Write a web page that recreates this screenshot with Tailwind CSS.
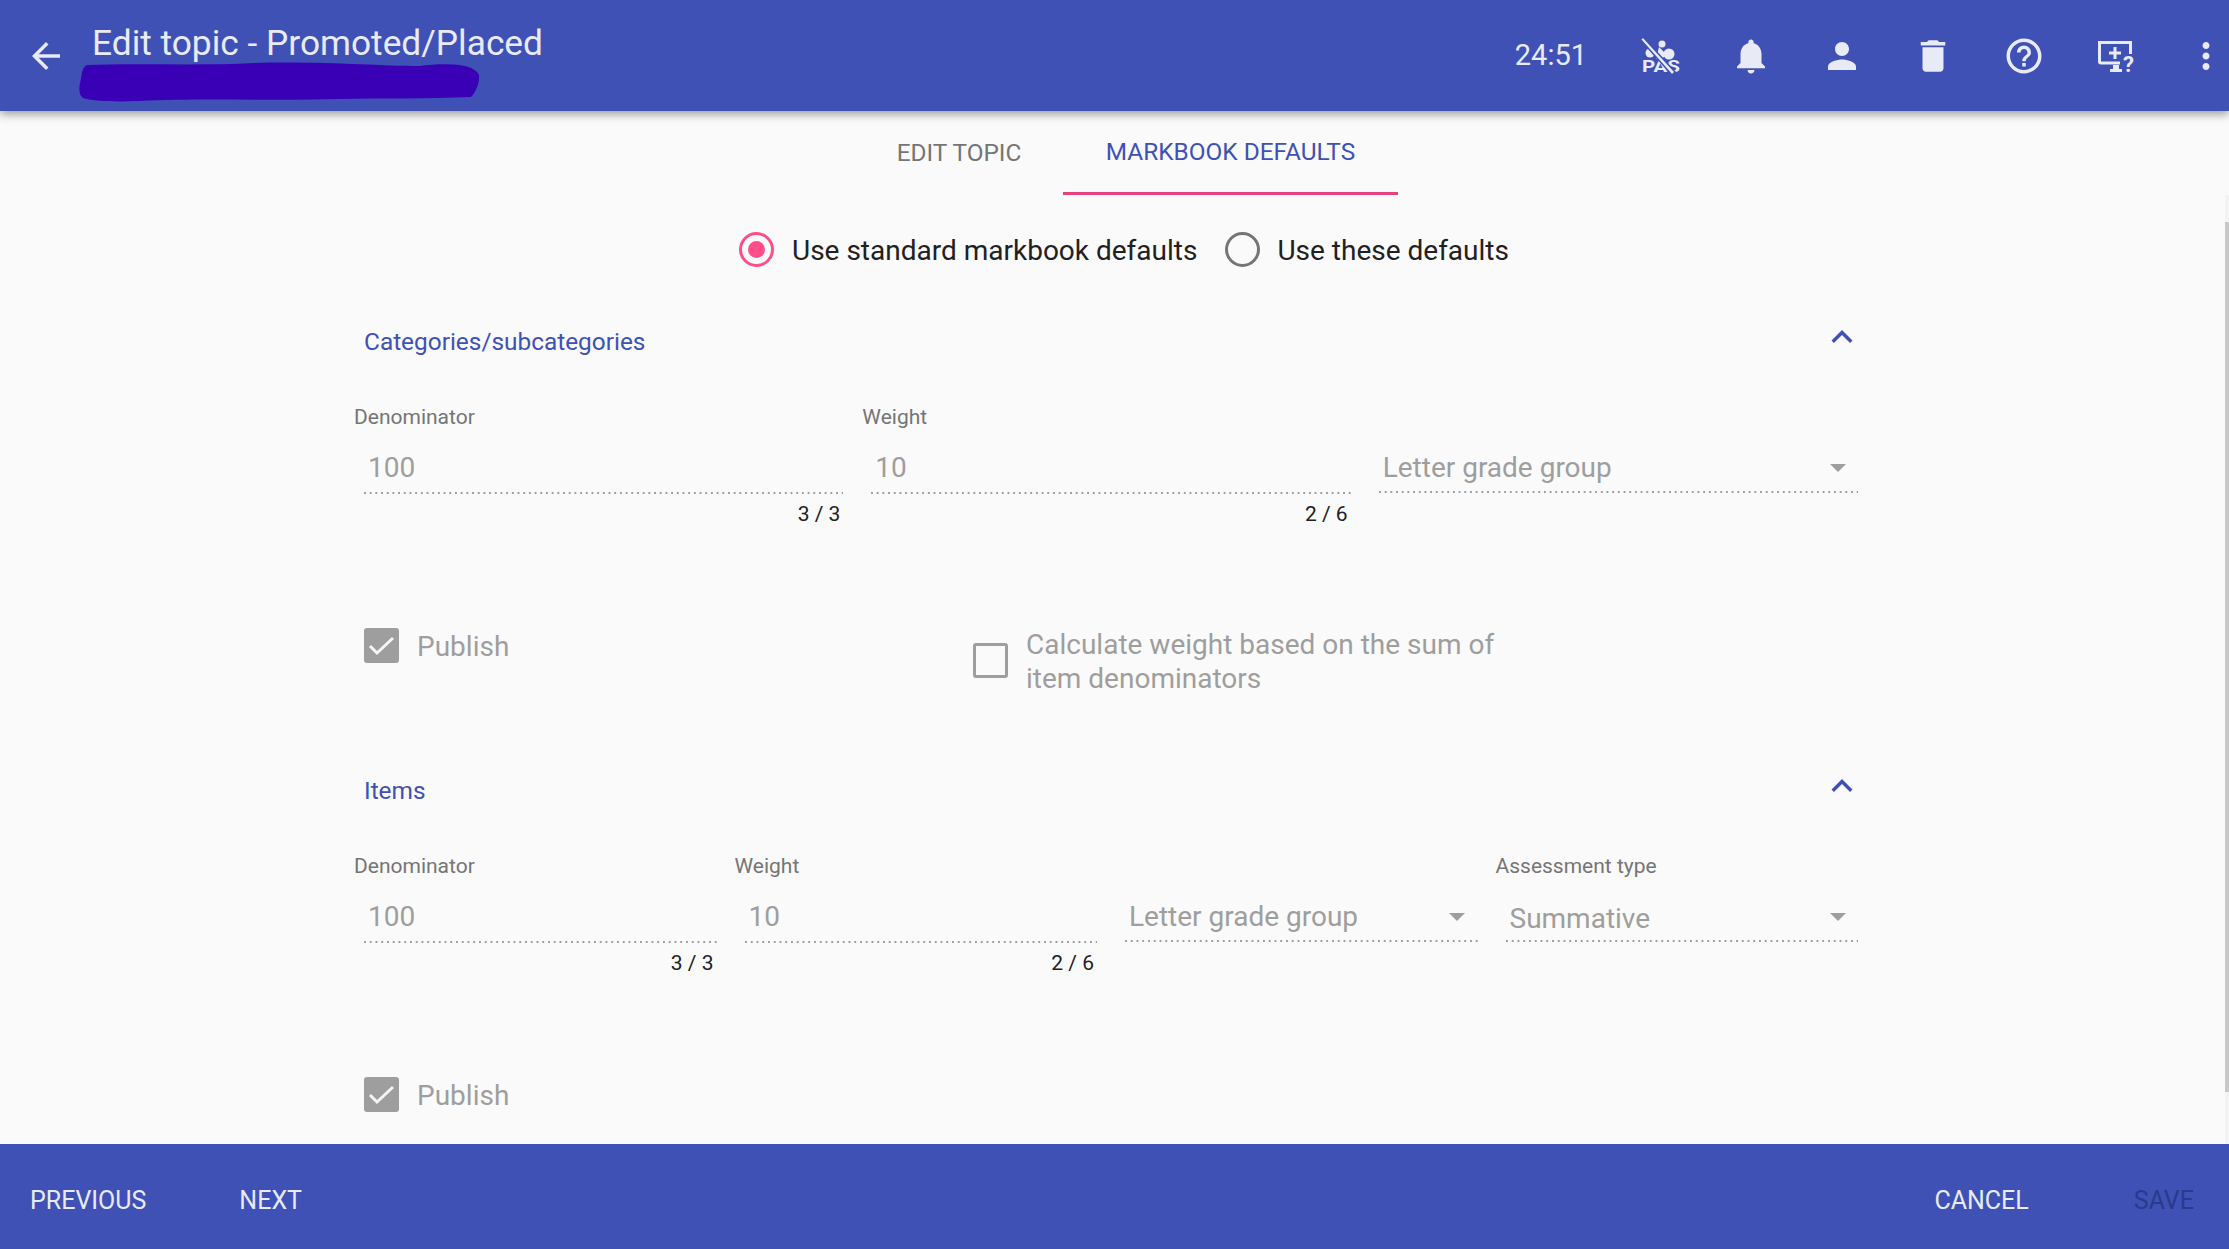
<!DOCTYPE html>
<html>
<head>
  <meta charset="UTF-8">
  <title>Edit topic</title>
  <script src="https://cdn.jsdelivr.net/npm/@tailwindcss/browser@4"></script>
</head>
<body class="h-[1249px] w-[2229px] overflow-hidden flex flex-col bg-[#fafafa] font-['Roboto',sans-serif] text-[28px]">
  <!-- top bar -->
  <header class="relative z-10 h-[111px] shrink-0 flex items-center bg-[#3f51b5] text-[#e8eaf6] shadow-[0_3px_9px_rgba(0,0,0,0.4)]">
    <svg class="w-[42px] h-[42px] ml-[25px] fill-current" viewBox="0 0 24 24"><path d="M20 11H7.83l5.59-5.59L12 4l-8 8 8 8 1.41-1.41L7.83 13H20v-2z"/></svg>
    <h1 class="ml-[25px] -mt-[25px] text-[35.3px] leading-[40px] font-normal">Edit topic - Promoted/Placed</h1>
    <svg class="absolute left-[79px] top-[61px] w-[402px] h-[41px]" viewBox="0 0 402 41"><path fill="#3a00b5" d="M8 4 C60 2 120 5 175 2 C240 0 300 5 340 5 C365 2 395 2 400 14 C401 22 396 32 392 36 C350 38 300 37 260 38 C200 40 120 37 60 40 C35 41 12 40 4 37 C-1 33 0 25 2 18 C3 10 4 6 8 4 Z"/></svg>
    <span class="ml-auto text-[29px] text-[#e8eaf6]">24:51</span>
    <div class="flex items-center gap-[49px] ml-[52px] mr-[2px]">
      <svg class="w-[42px] h-[38px] fill-current" viewBox="0 0 42 38">
        <circle cx="23" cy="7" r="3.5"/><circle cx="30" cy="17" r="5.5"/><circle cx="11" cy="16" r="4.5"/>
        <path d="M20 10l8 8-6 4h-5z"/>
        <text x="3" y="35" font-family="Roboto" font-weight="700" font-size="17" textLength="38" lengthAdjust="spacingAndGlyphs" fill="#e8eaf6">PAS</text>
        <path d="M4 0l-2.500 2.500L33 38l3-3z" stroke="#3f51b5" stroke-width="1.500"/>
      </svg>
      <svg class="w-[42px] h-[42px] fill-current" viewBox="0 0 24 24"><path d="M12 22c1.1 0 2-.9 2-2h-4c0 1.1.89 2 2 2zm6-6v-5c0-3.07-1.64-5.64-4.5-6.32V4c0-.83-.67-1.5-1.5-1.5s-1.5.67-1.5 1.5v.68C7.63 5.36 6 7.92 6 11v5l-2 2v1h16v-1l-2-2z"/></svg>
      <svg class="w-[42px] h-[42px] fill-current" viewBox="0 0 24 24"><path d="M12 12c2.21 0 4-1.79 4-4s-1.79-4-4-4-4 1.79-4 4 1.79 4 4 4zm0 2c-2.67 0-8 1.34-8 4v2h16v-2c0-2.66-5.33-4-8-4z"/></svg>
      <svg class="w-[42px] h-[42px] fill-current" viewBox="0 0 24 24"><path d="M6 19c0 1.1.9 2 2 2h8c1.1 0 2-.9 2-2V7H6v12zM19 4h-3.5l-1-1h-5l-1 1H5v2h14V4z"/></svg>
      <svg class="w-[42px] h-[42px] fill-current" viewBox="0 0 24 24"><path d="M11 18h2v-2h-2v2zm1-16C6.48 2 2 6.48 2 12s4.48 10 10 10 10-4.48 10-10S17.52 2 12 2zm0 18c-4.41 0-8-3.59-8-8s3.59-8 8-8 8 3.59 8 8-3.59 8-8 8zm0-14c-2.21 0-4 1.79-4 4h2c0-1.1.9-2 2-2s2 .9 2 2c0 2-3 1.75-3 5h2c0-2.25 3-2.500 3-5 0-2.21-1.79-4-4-4z"/></svg>
      <svg class="w-[42px] h-[34px]" viewBox="-1 0 42 34">
        <path fill="none" stroke="#e8eaf6" stroke-width="3" d="M25 24H6a1.500 1.500 0 0 1-1.500-1.500V3.500h31V15"/>
        <path fill="#e8eaf6" d="M18.500 8h3v4.500H26v3h-4.500V20h-3v-4.500H14v-3h4.500zM18 26h6v4h3v3H15v-3h3z"/>
        <text x="28" y="33" font-family="Roboto" font-weight="700" font-size="22" fill="#e8eaf6">?</text>
      </svg>
      <svg class="w-[42px] h-[42px] fill-current" viewBox="0 0 24 24"><path d="M12 8c1.1 0 2-.9 2-2s-.9-2-2-2-2 .9-2 2 .9 2 2 2zm0 2c-1.1 0-2 .9-2 2s.9 2 2 2 2-.9 2-2-.9-2-2-2zm0 6c-1.1 0-2 .9-2 2s.9 2 2 2 2-.9 2-2-.9-2-2-2z"/></svg>
    </div>
  </header>

  <div class="flex-1 flex min-h-0">
    <main class="flex-1 min-w-0 overflow-hidden">
      <!-- tabs -->
      <nav class="flex justify-center h-[84px] pl-[24px] text-[24.4px]">
        <div class="w-[212px] flex items-center justify-center h-[82px] pl-[4px] pt-[2px] text-[#757575]">EDIT TOPIC</div>
        <div class="w-[335px] flex items-center justify-center h-[84px] pt-[2px] text-[#3f51b5] border-b-[3px] border-[#e7407f]">MARKBOOK DEFAULTS</div>
      </nav>

      <!-- radios -->
      <div class="flex items-center h-[35px] mt-[37px] ml-[739px] text-[#212121]">
        <span class="w-[35px] h-[35px] rounded-full border-[3px] border-[#ff4f8b] flex items-center justify-center"><span class="w-[17px] h-[17px] rounded-full bg-[#ff4f8b]"></span></span>
        <span class="ml-[18px] mt-[2px]">Use standard markbook defaults</span>
        <span class="ml-[28px] w-[35px] h-[35px] rounded-full border-[3px] border-[#757575]"></span>
        <span class="ml-[17px] mt-[2px]">Use these defaults</span>
      </div>

      <div class="ml-[364px] w-[1494px]">
        <!-- categories -->
        <section class="mt-[55px]">
          <div class="flex items-center justify-between h-[40px]">
            <h2 class="text-[24.4px] font-normal text-[#3f51b5]">Categories/subcategories</h2>
            <svg class="w-[42px] h-[42px] -mt-[11px] mr-[-5px] fill-[#3f51b5]" viewBox="0 0 24 24"><path d="M12 8l-6 6 1.41 1.41L12 10.83l4.59 4.58L18 14z"/></svg>
          </div>
          <div class="grid grid-cols-3 gap-x-[28px] mt-[43px]">
            <div>
              <label class="block -ml-[10px] text-[21px] leading-[24px] text-[#757575]">Denominator</label>
              <div class="h-[40px] mt-[19px] pl-[4px] leading-[40px] text-[#9e9e9e]">100</div>
              <div class="h-[2px] mt-[4px] bg-[linear-gradient(to_right,#9e9e9e_33%,transparent_0)] bg-[length:5.7px_2px] bg-repeat-x"></div>
              <div class="mt-[8px] pr-[3px] text-right text-[21px] leading-[24px] text-[#212121]">3 / 3</div>
            </div>
            <div>
              <label class="block -ml-[9px] text-[21px] leading-[24px] text-[#757575]">Weight</label>
              <div class="h-[40px] mt-[19px] pl-[4px] leading-[40px] text-[#9e9e9e]">10</div>
              <div class="h-[2px] mt-[4px] bg-[linear-gradient(to_right,#9e9e9e_33%,transparent_0)] bg-[length:5.7px_2px] bg-repeat-x"></div>
              <div class="mt-[8px] pr-[3px] text-right text-[21px] leading-[24px] text-[#212121]">2 / 6</div>
            </div>
            <div class="pt-[43px]">
              <div class="flex items-center justify-between h-[40px] pl-[4px] pr-[12px] text-[#9e9e9e]">
                <span>Letter grade group</span>
                <span class="w-0 h-0 border-x-[8px] border-t-[8px] border-x-transparent border-t-[#9e9e9e]"></span>
              </div>
              <div class="h-[2px] mt-[3px] bg-[linear-gradient(to_right,#9e9e9e_33%,transparent_0)] bg-[length:5.7px_2px] bg-repeat-x"></div>
            </div>
          </div>
          <div class="flex mt-[102px] text-[#9e9e9e]">
            <div class="flex items-start w-[609px]">
              <span class="w-[35px] h-[35px] rounded-[3px] bg-[#9e9e9e]">
                <svg class="w-[35px] h-[35px]" viewBox="0 0 35 35"><path fill="none" stroke="#f5f5f5" stroke-width="3" d="M6 18l7 7L29 10"/></svg>
              </span>
              <span class="ml-[18px] mt-[1px] leading-[35px]">Publish</span>
            </div>
            <div class="flex items-center w-[540px] -mt-[1px]">
              <span class="w-[35px] h-[35px] -mt-[2px] shrink-0 rounded-[3px] border-[3px] border-[#9e9e9e]"></span>
              <span class="ml-[18px] mt-[1px] leading-[34px]">Calculate weight based on the sum of item denominators</span>
            </div>
          </div>
        </section>

        <!-- items -->
        <section class="mt-[75px]">
          <div class="flex items-center justify-between h-[40px]">
            <h2 class="text-[24.4px] font-normal text-[#3f51b5]">Items</h2>
            <svg class="w-[42px] h-[42px] -mt-[11px] mr-[-5px] fill-[#3f51b5]" viewBox="0 0 24 24"><path d="M12 8l-6 6 1.41 1.41L12 10.83l4.59 4.58L18 14z"/></svg>
          </div>
          <div class="grid grid-cols-4 gap-x-[28px] mt-[43px]">
            <div>
              <label class="block -ml-[10px] text-[21px] leading-[24px] text-[#757575]">Denominator</label>
              <div class="h-[40px] mt-[19px] pl-[4px] leading-[40px] text-[#9e9e9e]">100</div>
              <div class="h-[2px] mt-[4px] bg-[linear-gradient(to_right,#9e9e9e_33%,transparent_0)] bg-[length:5.75px_2px] bg-repeat-x"></div>
              <div class="mt-[8px] pr-[3px] text-right text-[21px] leading-[24px] text-[#212121]">3 / 3</div>
            </div>
            <div>
              <label class="block -ml-[10px] text-[21px] leading-[24px] text-[#757575]">Weight</label>
              <div class="h-[40px] mt-[19px] pl-[4px] leading-[40px] text-[#9e9e9e]">10</div>
              <div class="h-[2px] mt-[4px] bg-[linear-gradient(to_right,#9e9e9e_33%,transparent_0)] bg-[length:5.75px_2px] bg-repeat-x"></div>
              <div class="mt-[8px] pr-[3px] text-right text-[21px] leading-[24px] text-[#212121]">2 / 6</div>
            </div>
            <div class="pt-[43px]">
              <div class="flex items-center justify-between h-[40px] pl-[4px] pr-[13px] text-[#9e9e9e]">
                <span>Letter grade group</span>
                <span class="w-0 h-0 border-x-[8px] border-t-[8px] border-x-transparent border-t-[#9e9e9e]"></span>
              </div>
              <div class="h-[2px] mt-[3px] bg-[linear-gradient(to_right,#9e9e9e_33%,transparent_0)] bg-[length:5.75px_2px] bg-repeat-x"></div>
            </div>
            <div>
              <label class="block -ml-[10px] text-[21px] leading-[24px] text-[#757575]">Assessment type</label>
              <div class="flex items-center justify-between h-[40px] mt-[21px] pl-[4px] pr-[12px] text-[#9e9e9e]">
                <span>Summative</span>
                <span class="w-0 h-0 border-x-[8px] border-t-[8px] border-x-transparent border-t-[#9e9e9e] -mt-[4px]"></span>
              </div>
              <div class="h-[2px] mt-[1px] bg-[linear-gradient(to_right,#9e9e9e_33%,transparent_0)] bg-[length:5.75px_2px] bg-repeat-x"></div>
            </div>
          </div>
          <div class="flex items-start mt-[102px] text-[#9e9e9e]">
            <span class="w-[35px] h-[35px] rounded-[3px] bg-[#9e9e9e]">
              <svg class="w-[35px] h-[35px]" viewBox="0 0 35 35"><path fill="none" stroke="#f5f5f5" stroke-width="3" d="M6 18l7 7L29 10"/></svg>
            </span>
            <span class="ml-[18px] mt-[1px] leading-[35px]">Publish</span>
          </div>
        </section>
      </div>
    </main>
    <!-- scrollbar -->
    <div class="w-[4px] shrink-0 pt-[84px]">
      <div class="h-[949px] pt-[27px] bg-[#f3f3f3]">
        <div class="h-[870px] bg-[#c8c8c8]"></div>
      </div>
    </div>
  </div>

  <!-- bottom bar -->
  <footer class="h-[105px] shrink-0 flex items-center pt-[8px] bg-[#3f51b5] text-[25px] text-[#e8eaf6]">
    <span class="ml-[30px]">PREVIOUS</span>
    <span class="ml-[93px]">NEXT</span>
    <span class="ml-auto">CANCEL</span>
    <span class="ml-[105px] mr-[35px] text-[#2a3a8c]">SAVE</span>
  </footer>
</body>
</html>
